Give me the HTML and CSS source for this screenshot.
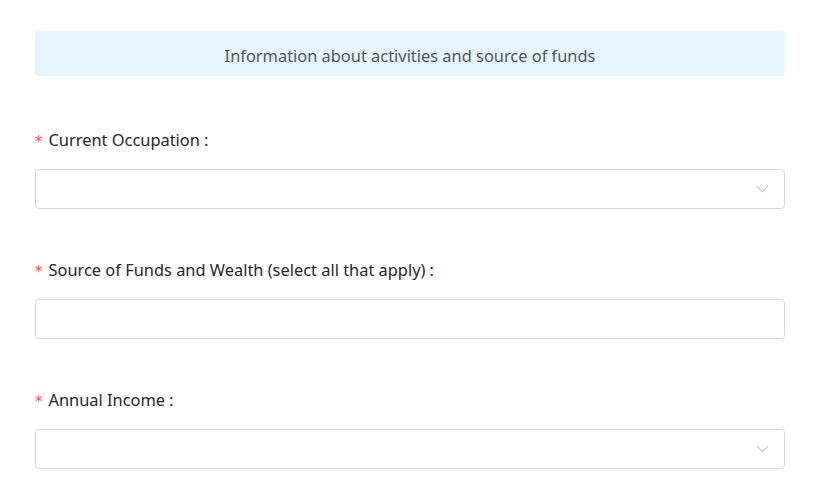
FILE: index.html
```html
<!doctype html>
<html>
  <head>
    <title>Activities and source of funds</title>
    <meta name="viewport" content="width=device-width, initial-scale=1">
    <link rel="stylesheet" href="styles.css">
  </head>
  <body>
    <main class="form">
      <div class="banner">Information about activities and source of funds</div>

      <div class="field">
        <label class="label"><span class="req">*</span>Current Occupation<span class="colon">:</span></label>
        <div class="select">
          <svg class="arrow" viewBox="0 0 14 8" fill="none" stroke="currentColor">
            <path d="M1 1l6 6 6-6" stroke-width="1.1" />
          </svg>
        </div>
      </div>

      <div class="field">
        <label class="label"><span class="req">*</span>Source of Funds and Wealth (select all that apply)<span class="colon">:</span></label>
        <div class="select"></div>
      </div>

      <div class="field">
        <label class="label"><span class="req">*</span>Annual Income<span class="colon">:</span></label>
        <div class="select">
          <svg class="arrow" viewBox="0 0 14 8" fill="none" stroke="currentColor">
            <path d="M1 1l6 6 6-6" stroke-width="1.1" />
          </svg>
        </div>
      </div>
    </main>
  </body>
</html>
```

FILE: styles.css
```css
* {
  margin: 0;
  padding: 0;
  box-sizing: border-box;
}

html, body {
  background: #fff;
}

body {
  font-family: "Noto Sans", "Open Sans", sans-serif;
  color: #262626;
}

.form {
  width: 750px;
  margin: 31px 0 0 35px;
}

.banner {
  height: 45px;
  padding-top: 3px;
  background-color: #e6f5fd;
  border-radius: 4px;

  display: flex;
  align-items: center;
  justify-content: center;

  color: #555;
  font-size: 16.4px;
}

.field {
  margin-top: 51px;
}

.field + .field {
  margin-top: 48px;
}

.label {
  display: flex;
  align-items: center;
  height: 24px;
  font-size: 16.4px;
  color: #262626;
}

.req {
  color: #ff4d4f;
  font-family: "DejaVu Sans", sans-serif;
  font-size: 15px;
  margin-right: 6px;
  padding-top: 6px;
}

.colon {
  margin-left: 4px;
}

.select {
  margin-top: 18px;
  height: 40px;
  border: 1px solid #d9d9d9;
  border-radius: 4px;

  display: flex;
  align-items: center;
  justify-content: flex-end;
  padding-right: 15px;
}

.arrow {
  width: 13px;
  height: 8px;
  color: #bfbfbf;
}
```
